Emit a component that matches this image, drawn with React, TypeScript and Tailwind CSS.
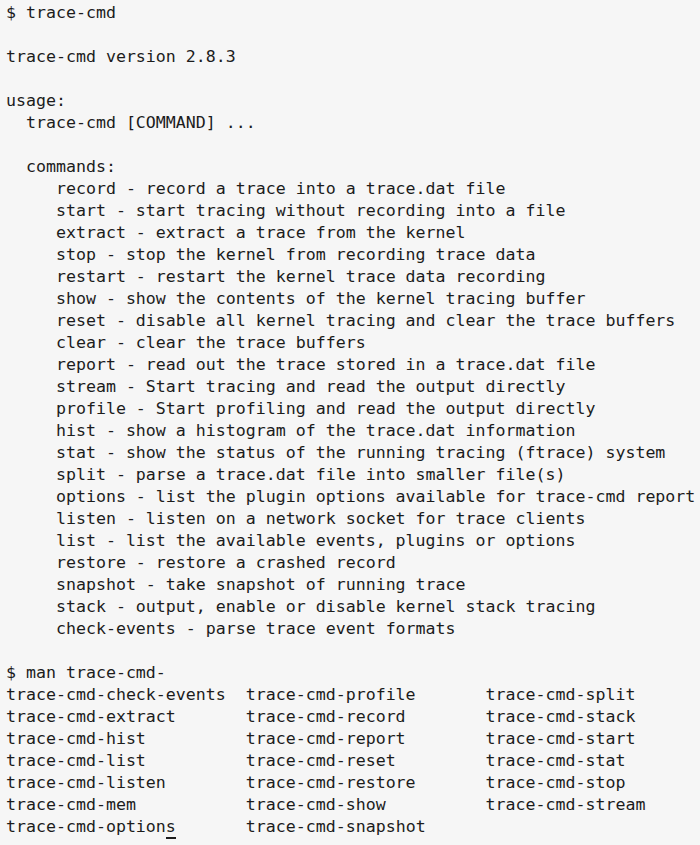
import React from "react";

const lines = `$ trace-cmd

trace-cmd version 2.8.3

usage:
  trace-cmd [COMMAND] ...

  commands:
     record - record a trace into a trace.dat file
     start - start tracing without recording into a file
     extract - extract a trace from the kernel
     stop - stop the kernel from recording trace data
     restart - restart the kernel trace data recording
     show - show the contents of the kernel tracing buffer
     reset - disable all kernel tracing and clear the trace buffers
     clear - clear the trace buffers
     report - read out the trace stored in a trace.dat file
     stream - Start tracing and read the output directly
     profile - Start profiling and read the output directly
     hist - show a histogram of the trace.dat information
     stat - show the status of the running tracing (ftrace) system
     split - parse a trace.dat file into smaller file(s)
     options - list the plugin options available for trace-cmd report
     listen - listen on a network socket for trace clients
     list - list the available events, plugins or options
     restore - restore a crashed record
     snapshot - take snapshot of running trace
     stack - output, enable or disable kernel stack tracing
     check-events - parse trace event formats

$ man trace-cmd-
trace-cmd-check-events  trace-cmd-profile       trace-cmd-split
trace-cmd-extract       trace-cmd-record        trace-cmd-stack
trace-cmd-hist          trace-cmd-report        trace-cmd-start
trace-cmd-list          trace-cmd-reset         trace-cmd-stat
trace-cmd-listen        trace-cmd-restore       trace-cmd-stop
trace-cmd-mem           trace-cmd-show          trace-cmd-stream
`;

export default function App() {
  return (
    <div className="w-[700px] h-[845px] bg-[#f6f6f6] overflow-hidden pl-[6px] pt-[2px]">
      <pre
        className="m-0 whitespace-pre text-[16.6px] leading-[22px] text-[#1c1c1c]"
        style={{ fontFamily: '"DejaVu Sans Mono", monospace' }}
      >
        {lines}
        {"trace-cmd-option"}
        <span className="relative">
          s
          <span className="absolute left-0 right-0 bottom-[-3px] h-[2px] bg-[#1c1c1c]" />
        </span>
        {"       trace-cmd-snapshot"}
      </pre>
    </div>
  );
}
